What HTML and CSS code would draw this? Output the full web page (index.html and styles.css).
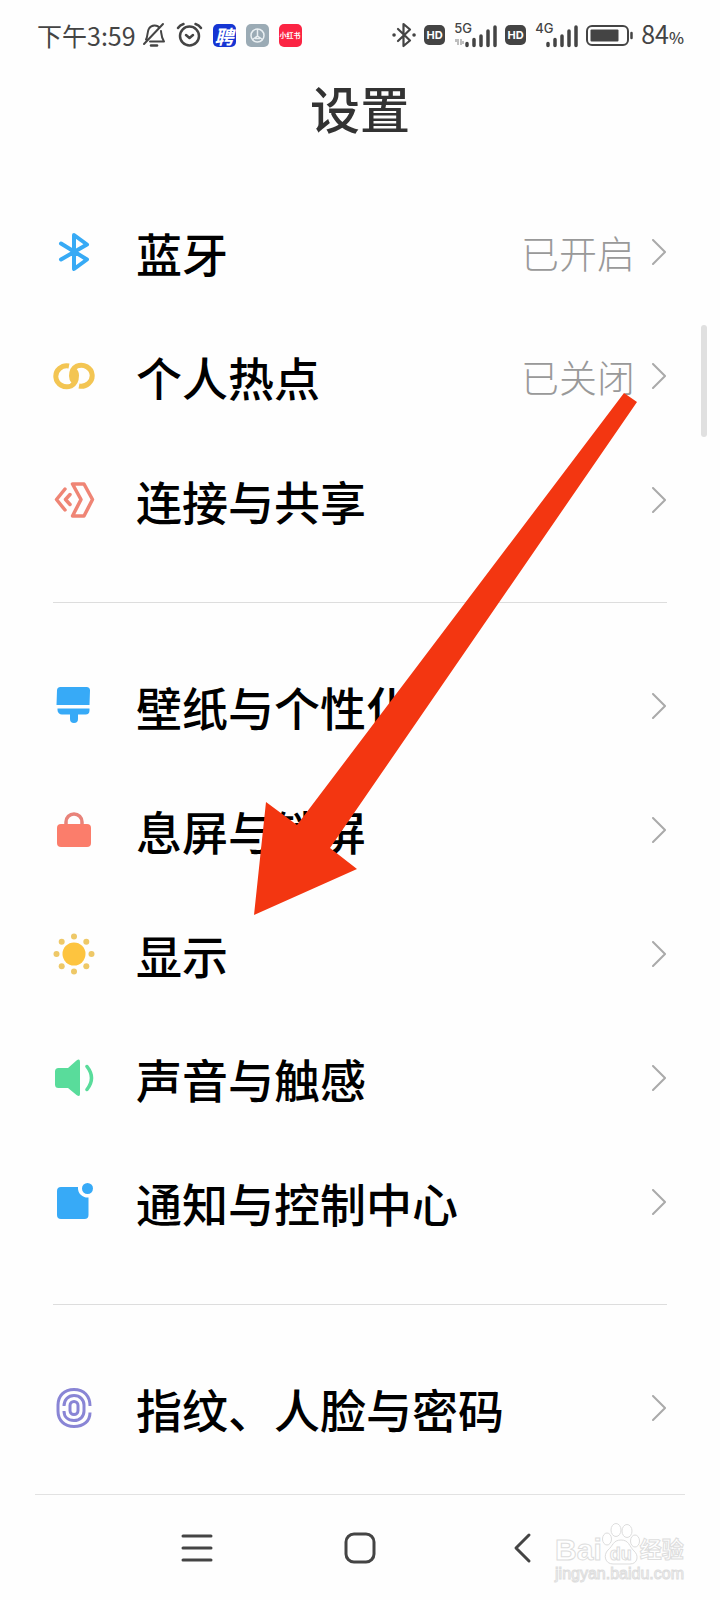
FILE: index.html
```html
<!DOCTYPE html>
<html lang="zh-CN">
<head>
<meta charset="utf-8">
<meta name="viewport" content="width=device-width, initial-scale=1">
<title>设置</title>
<link rel="stylesheet" href="styles.css">
</head>
<body>
<div class="screen">
  <header class="status">
    <div class="status-left">
      <span class="clock">下午3:59</span>
      <svg class="bell" width="24" height="26" viewBox="0 0 24 26" fill="none" stroke="#444" stroke-width="2" stroke-linecap="round" stroke-linejoin="round"><path d="M4 17.500c2-3 1-8 3-11 2.500-4 8.500-4 10.500-.5M19 9c.5 4 .5 7 3 10.500H8M2 22L21 2"/><path d="M9 23.500h6" stroke-width="2.500"/></svg>
      <svg width="27" height="26" viewBox="0 0 27 26" fill="none" stroke="#444" stroke-width="2.500" stroke-linecap="round" stroke-linejoin="round"><circle cx="13.500" cy="14" r="9.500"/><path d="M2 6Q4 3 7.500 2M25 6Q23 3 19.500 2M10 13l3.500 3 3.500-3"/></svg>
      <span class="app app-jobs">聘</span>
      <span class="app app-car"><svg width="23" height="23" viewBox="0 0 23 23" fill="none" stroke="#e9eff2" stroke-width="1.500"><circle cx="11.500" cy="11.500" r="6.500"/><path d="M11.500 5v7l-5 3.500M11.500 12l5 3.500M9 14.500h5"/></svg></span>
      <span class="app app-red">小红书</span>
    </div>
    <div class="status-right">
      <svg width="24" height="26" viewBox="0 0 24 26" fill="none" stroke="#444" stroke-width="2.200" stroke-linejoin="round" stroke-linecap="round"><path d="M6 7l12 11.500-6.500 5.500V2L18 7.500 6 19"/><path d="M2 13h.1M22 13h.1" stroke-width="3.500"/></svg>
      <span class="hd">HD</span>
      <span class="net"><span class="gen">5G</span><svg width="44" height="26" viewBox="0 0 44 26"><path d="M3 20v-3M5 23v-6M8 17v6M10 19v3" stroke="#aaa" stroke-width="1.500"/><path d="M14 23.500v-2M21 23.500v-6M28 23.500V14M35 23.500V9M42 23.500V5" stroke="#444" stroke-width="3.500" stroke-linecap="round"/></svg></span>
      <span class="hd">HD</span>
      <span class="net"><span class="gen">4G</span><svg width="44" height="26" viewBox="0 0 44 26"><path d="M14 23.500v-2M21 23.500v-6M28 23.500V14M35 23.500V9M42 23.500V5" stroke="#444" stroke-width="3.500" stroke-linecap="round"/></svg></span>
      <svg class="battery" width="47" height="21" viewBox="0 0 47 21"><rect x="1" y="1" width="41" height="19" rx="5" fill="none" stroke="#444" stroke-width="2"/><rect x="4.500" y="4.500" width="28" height="12" rx="1" fill="#444"/><path d="M45.500 8v5" stroke="#444" stroke-width="2.500" stroke-linecap="round"/></svg>
      <span class="clock">84<small class="percent">%</small></span>
    </div>
  </header>
  <h1 class="title">设置</h1>
  <main class="list">
    <a class="row" href="#"><svg class="icon" viewBox="0 0 42 42" fill="none" stroke="#37aaf5" stroke-width="4" stroke-linecap="round" stroke-linejoin="round"><path d="M8 12.500l26 16-13 9.500V4l13 9.500-26 15"/></svg><span class="label">蓝牙</span><span class="value">已开启</span><svg class="chev" viewBox="0 0 14 26"><path d="M1 1l12 12L1 25"/></svg></a>
    <a class="row" href="#"><svg class="icon" viewBox="0 0 42 42" fill="none" stroke="#f3c553" stroke-width="5"><path d="M16 11A11 10.500 0 1 0 18 31C22 29 23.500 25 23.500 20.500Q23.500 17 21 15"/><path d="M26 31A11 10.500 0 1 0 24 11C20 13 18.500 17 18.500 21Q18.500 24 20.500 26.500" /></svg><span class="label">个人热点</span><span class="value">已关闭</span><svg class="chev" viewBox="0 0 14 26"><path d="M1 1l12 12L1 25"/></svg></a>
    <a class="row" href="#"><svg class="icon" viewBox="0 0 42 42" fill="none" stroke="#ef8575" stroke-width="3.500" stroke-linecap="round" stroke-linejoin="round"><path d="M12 10L3.500 20.500 12 31M17 15.500l-4.500 5 4.500 5M19.500 5H31l8.500 15.500L31 37H19.500L28 20.500z"/></svg><span class="label">连接与共享</span><svg class="chev" viewBox="0 0 14 26"><path d="M1 1l12 12L1 25"/></svg></a>
    <hr class="divider">
    <a class="row" href="#"><svg class="icon" viewBox="0 0 42 42" fill="#37aaf7"><path d="M7.500 2h26a3.500 3.500 0 0 1 3.500 3.500L36.500 20h-33L4 5.500A3.500 3.500 0 0 1 7.500 2zM4.500 23.500h32v2a4 4 0 0 1-4 4H25V34a4 4 0 0 1-8 0v-4.500H9a4.500 4.500 0 0 1-4.500-4.500z"/></svg><span class="label">壁纸与个性化</span><svg class="chev" viewBox="0 0 14 26"><path d="M1 1l12 12L1 25"/></svg></a>
    <a class="row" href="#"><svg class="icon" viewBox="0 0 42 42"><path d="M13 17v-4a8 8 0 0 1 16 0v4" fill="none" stroke="#e8837a" stroke-width="3.500"/><rect x="4" y="15" width="34" height="23" rx="4" fill="#fb7d6b"/></svg><span class="label">息屏与锁屏</span><svg class="chev" viewBox="0 0 14 26"><path d="M1 1l12 12L1 25"/></svg></a>
    <a class="row" href="#"><svg class="icon" viewBox="0 0 42 42" fill="#eec867"><circle cx="21" cy="21" r="11.500" fill="#fdc43f"/><circle cx="21" cy="3.500" r="3"/><circle cx="21" cy="38.500" r="3"/><circle cx="3.500" cy="21" r="3"/><circle cx="38.500" cy="21" r="3"/><circle cx="8.700" cy="8.700" r="3"/><circle cx="33.300" cy="8.700" r="3"/><circle cx="8.700" cy="33.300" r="3"/><circle cx="33.300" cy="33.300" r="3"/></svg><span class="label">显示</span><svg class="chev" viewBox="0 0 14 26"><path d="M1 1l12 12L1 25"/></svg></a>
    <a class="row" href="#"><svg class="icon" viewBox="0 0 42 42"><path d="M5.500 11H15l8.500-7.500Q27 1 27 5v32q0 3.500-3.500 1L15 31H5.500A3.500 3.500 0 0 1 2 27.500v-13A3.500 3.500 0 0 1 5.500 11z" fill="#59dc9b"/><path d="M34 9.500q9 11.500 0 23" fill="none" stroke="#59dc9b" stroke-width="3.500" stroke-linecap="round"/></svg><span class="label">声音与触感</span><svg class="chev" viewBox="0 0 14 26"><path d="M1 1l12 12L1 25"/></svg></a>
    <a class="row" href="#"><svg class="icon" viewBox="0 0 42 42" fill="#37aaf7"><path d="M8 6h17a9.500 9.500 0 0 0 10.500 10.500V34a4 4 0 0 1-4 4H8a4 4 0 0 1-4-4V10a4 4 0 0 1 4-4z"/><circle cx="34.500" cy="7.500" r="5.500"/></svg><span class="label">通知与控制中心</span><svg class="chev" viewBox="0 0 14 26"><path d="M1 1l12 12L1 25"/></svg></a>
    <hr class="divider">
    <a class="row" href="#"><svg class="icon" viewBox="0 0 42 42" fill="none" stroke="#8985d5" stroke-width="3"><rect x="17" y="14.500" width="8" height="13" rx="4"/><path d="M37 19C37 9 31 2.500 21 2.500S5 9 5 18v6c0 9 6 15.500 16 15.500S37 34 37 25.500M11 19c0-6 4-10.500 10-10.500S31 13 31 18v6M31 22v2c0 5.500-4 9.500-10 9.500S11 30 11 24"/></svg><span class="label">指纹、人脸与密码</span><svg class="chev" viewBox="0 0 14 26"><path d="M1 1l12 12L1 25"/></svg></a>
  </main>
  <nav class="nav">
    <button class="nav-btn" type="button" aria-label="菜单"><svg width="32" height="32" viewBox="0 0 32 32"><path d="M2 4h28M2 16h28M2 28h28"/></svg></button>
    <button class="nav-btn" type="button" aria-label="主页"><svg width="32" height="32" viewBox="0 0 32 32"><rect x="2" y="2" width="28" height="28" rx="8"/></svg></button>
    <button class="nav-btn" type="button" aria-label="返回"><svg width="32" height="32" viewBox="0 0 32 32"><path d="M22 3L9 16l13 13"/></svg></button>
  </nav>
  <div class="scrollbar"></div>
  <svg class="arrow" width="383" height="522" viewBox="254 393 383 522"><path d="M624 393L637 402 330 848 357 869 254 915 266 802 297 825z" fill="#f33611"/></svg>
  <div class="mark">
    <div class="mark-brand"><span>Bai</span><span class="paw"><svg width="38" height="42" viewBox="0 0 38 42" fill="#fff" stroke="#ddd"><ellipse cx="5" cy="16" rx="4.500" ry="6"/><ellipse cx="14" cy="7" rx="5" ry="6.500"/><ellipse cx="25" cy="8" rx="5" ry="6.500"/><ellipse cx="33" cy="18" rx="4.500" ry="6"/><path d="M19 17c-8 0-8 6-13 10-5 5-3 14 5 14h17c8 0 9-9 4-13-5-5-5-11-13-11z"/></svg><span class="paw-text">du</span></span><span class="mark-cn">经验</span></div>
    <div class="mark-url">jingyan.baidu.com</div>
  </div>
</div>
</body>
</html>
```
FILE: styles.css
```css
* { box-sizing: border-box; }
body {
  margin: 0;
  background: #fefefe;
  font-family: "Noto Sans CJK SC", sans-serif;
}
.screen {
  position: relative;
  display: flex;
  flex-direction: column;
  min-height: 100vh;
}
.status {
  display: flex;
  justify-content: space-between;
  align-items: center;
  height: 70px;
  padding: 0 36px 0 37px;
  color: #444;
}
.status-left, .status-right { display: flex; align-items: center; }
.status-left { gap: 10px; }
.status-right { gap: 8px; }
.bell { margin-left: -4px; }
.clock { font-size: 25px; line-height: 30px; }
.percent { font-size: 16px; font-weight: 500; }
.app {
  display: flex;
  align-items: center;
  justify-content: center;
  width: 23px;
  height: 23px;
  border-radius: 5px;
  color: #fff;
  overflow: hidden;
  white-space: nowrap;
}
.app-jobs { background: #1535d3; font-size: 19px; font-weight: 700; font-style: italic; }
.app-car { background: #9babb5; }
.app-red { background: #fb2443; font-size: 7px; font-weight: 700; }
.hd {
  width: 21px;
  height: 20px;
  border-radius: 5px;
  background: #444;
  color: #fff;
  font: 700 11px/20px Inter, sans-serif;
  text-align: center;
}
.net { position: relative; display: flex; }
.net svg { display: block; }
.gen {
  position: absolute;
  left: 1px;
  top: 0;
  font: 500 13px/13px Inter, sans-serif;
}
.title {
  margin: 0;
  color: #333;
  font-size: 50px;
  font-weight: 500;
  line-height: 74px;
  text-align: center;
}
.list { flex: 1; padding: 46px 53px 24px; }
.row {
  display: flex;
  align-items: center;
  height: 124px;
  color: #000;
  text-decoration: none;
}
.icon { width: 42px; height: 42px; margin-right: 41px; }
.label { flex: 1; font-size: 46px; font-weight: 500; line-height: 60px; }
.value { margin-right: 17px; color: #999; font-size: 38px; font-weight: 300; line-height: 60px; }
.chev {
  width: 14px;
  height: 26px;
  margin-right: 1px;
  fill: none;
  stroke: #aaa;
  stroke-width: 2;
  stroke-linecap: round;
}
.divider { height: 2px; margin: 40px 0; border: 0; border-top: 1px solid #ddd; }
.nav {
  display: flex;
  justify-content: space-between;
  height: 107px;
  margin: 0 35px;
  padding: 0 129px;
  border-top: 1px solid #e2e2e2;
}
.nav-btn {
  display: flex;
  align-items: center;
  justify-content: center;
  width: 66px;
  padding: 0;
  border: 0;
  background: none;
}
.nav-btn svg { fill: none; stroke: #444; stroke-width: 3; stroke-linecap: round; stroke-linejoin: round; }
.scrollbar {
  position: absolute;
  top: 325px;
  right: 13px;
  width: 6px;
  height: 112px;
  border-radius: 3px;
  background: #e0e0e0;
}
.arrow { position: absolute; left: 254px; top: 393px; pointer-events: none; }
.mark {
  position: absolute;
  right: 36px;
  bottom: 18px;
  color: #fff;
  font-family: "Liberation Sans", "Noto Sans CJK SC", sans-serif;
  -webkit-text-stroke: 1px #ddd;
  pointer-events: none;
}
.mark-brand { display: flex; align-items: flex-end; font-size: 30px; font-weight: 700; line-height: 30px; }
.mark-cn { font-size: 22px; }
.paw { position: relative; display: flex; }
.paw-text { position: absolute; left: 8px; bottom: 1px; font-size: 18px; line-height: 20px; }
.mark-url { font-size: 16px; line-height: 18px; }
```
